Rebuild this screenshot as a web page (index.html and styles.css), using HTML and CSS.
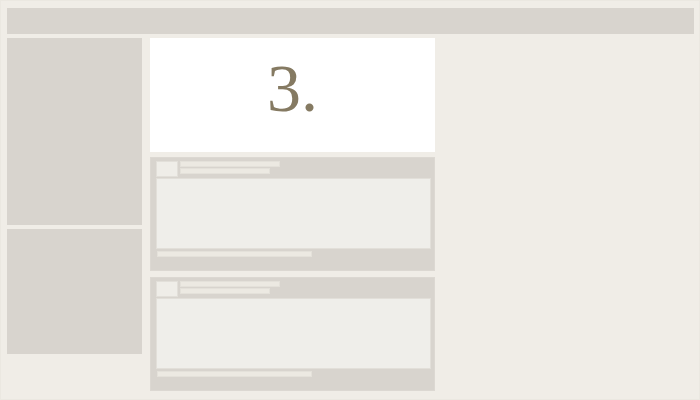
FILE: index.html
```html
<!DOCTYPE html>
<html>
<head>
<meta charset="utf-8">
<link rel="stylesheet" href="styles.css">
</head>
<body>
<div class="frame">
  <div class="topbar"></div>
  <div class="main">
    <div class="sidebar">
      <div class="side-box side-top"></div>
      <div class="side-box side-bottom"></div>
    </div>
    <div class="content">
      <div class="hero"><span class="hero-num">3.</span></div>
      <div class="card card-first">
        <div class="card-head">
          <div class="avatar"></div>
          <div class="meta">
            <div class="meta-line meta-1"></div>
            <div class="meta-line meta-2"></div>
          </div>
        </div>
        <div class="card-body"></div>
        <div class="card-foot"></div>
      </div>
      <div class="card card-second">
        <div class="card-head">
          <div class="avatar"></div>
          <div class="meta">
            <div class="meta-line meta-1"></div>
            <div class="meta-line meta-2"></div>
          </div>
        </div>
        <div class="card-body"></div>
        <div class="card-foot"></div>
      </div>
    </div>
  </div>
</div>
</body>
</html>
```
FILE: styles.css
```css
* { box-sizing: border-box; }
html, body { margin: 0; padding: 0; }
body { background: #f0ede7; font-family: "Liberation Serif", serif; }
.frame {
  width: 700px;
  height: 400px;
  background: #f0ede7;
  border: 1px solid #ebe8e1;
  padding: 7px 5px 0 6px;
  overflow: hidden;
}
.topbar { height: 26px; background: #d8d4ce; }
.main { display: flex; gap: 8px; margin-top: 4px; align-items: flex-start; }
.sidebar { width: 135px; display: flex; flex-direction: column; gap: 4px; }
.side-box { background: #d8d4ce; }
.side-top { height: 187px; }
.side-bottom { height: 125px; }
.content { width: 285px; display: flex; flex-direction: column; }
.hero {
  height: 114px;
  background: #ffffff;
  display: flex;
  align-items: center;
  justify-content: center;
}
.hero-num {
  font-family: "Liberation Serif", serif;
  font-size: 68px;
  line-height: 1;
  color: #857a62;
  margin-top: -14px;
}
.card {
  height: 114px;
  background: #d8d4ce;
  padding: 4px 3px 0 5px;
  border: 1px solid #dcd8d2;
}
.card-first { margin-top: 5px; }
.card-second { margin-top: 6px; }
.card-head { display: flex; gap: 2px; height: 16px; margin-top: -1px; }
.avatar {
  width: 22px;
  height: 16px;
  background: #efede8;
  border: 1px solid #e2dfd9;
}
.meta { display: flex; flex-direction: column; gap: 1px; }
.meta-line { background: #ece9e2; border: 1px solid #e4e1da; }
.meta-1 { width: 100px; height: 6px; }
.meta-2 { width: 90px; height: 6px; }
.card-body {
  margin-top: 1px;
  height: 71px;
  background: #efeeea;
  border: 1px solid #e2dfd9;
}
.card-foot {
  margin-top: 2px;
  margin-left: 1px;
  width: 155px;
  height: 6px;
  background: #ece9e2;
  border: 1px solid #e4e1da;
}
```
